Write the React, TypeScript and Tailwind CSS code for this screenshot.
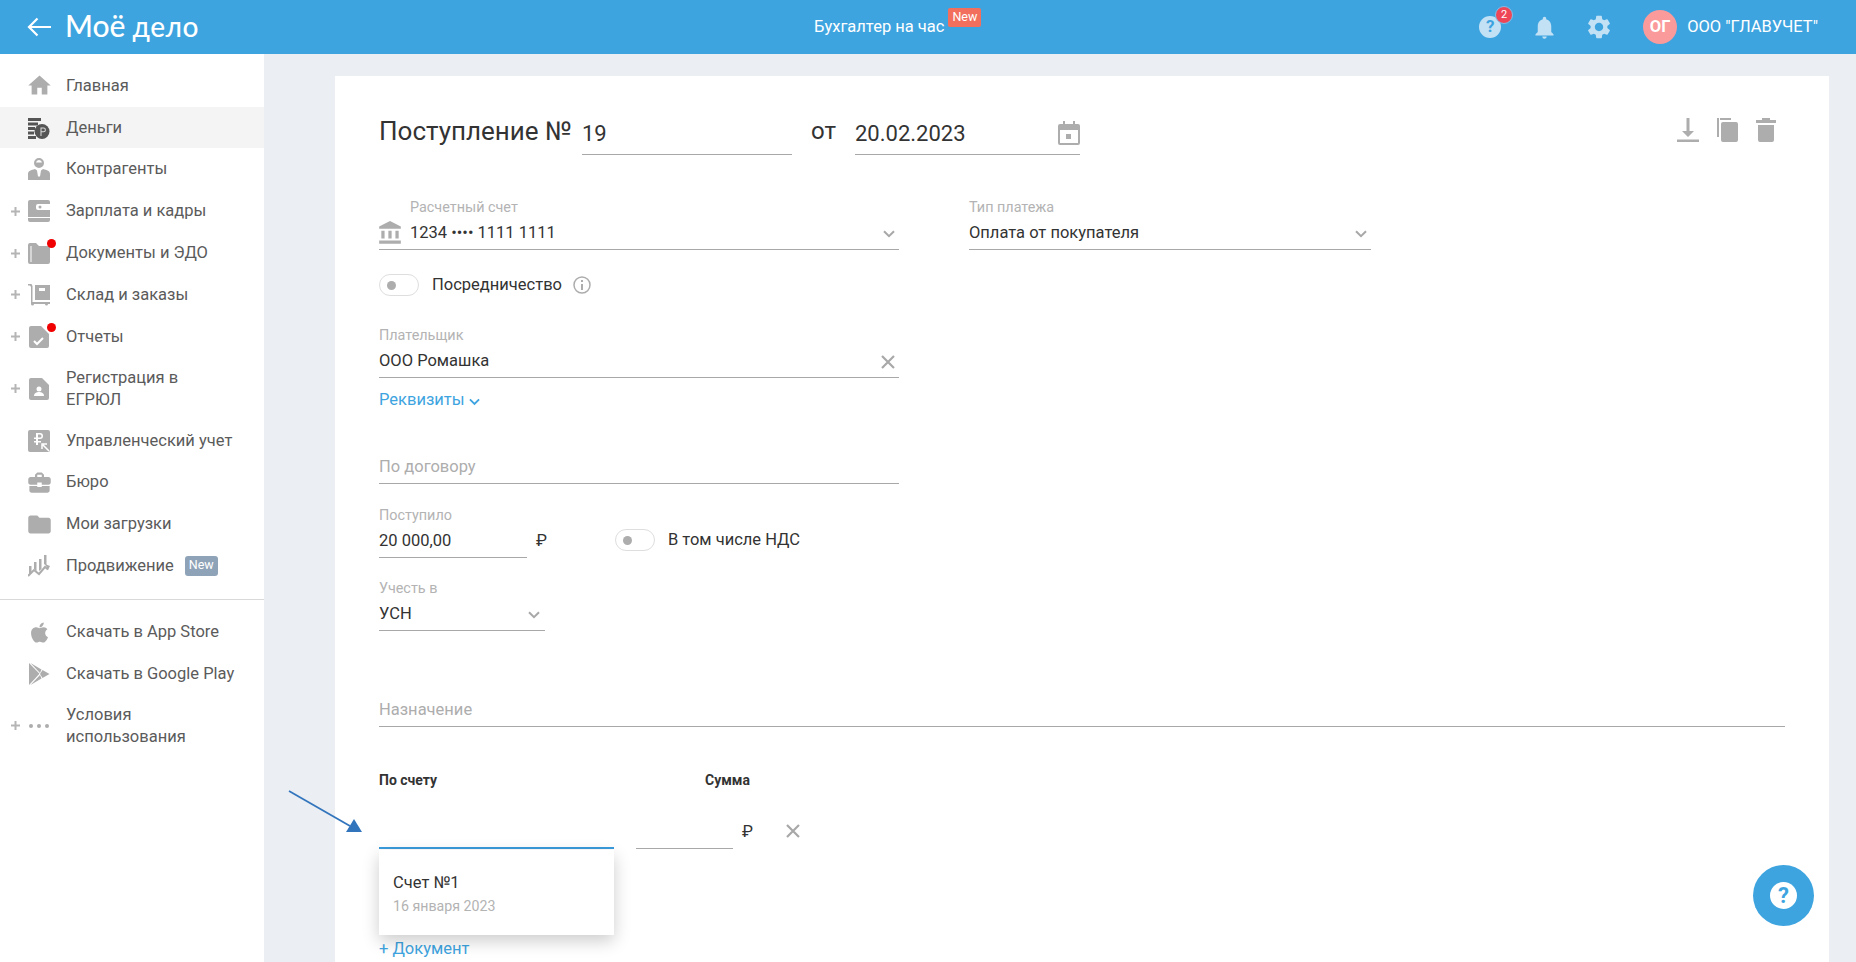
import React from "react";
import {
  MdHome, MdSettings, MdNotifications, MdBusinessCenter, MdFolder, MdAccountBalance,
} from "react-icons/md";
import { FaApple } from "react-icons/fa";

const G = "#adadad";

const Svg = ({ children, size = 22, c = G }: { children: React.ReactNode; size?: number; c?: string }) => (
  <svg width={size} height={size} viewBox="0 0 22 22" fill={c} className="shrink-0">{children}</svg>
);

const Money = () => (
  <Svg>
    <path d="M0 1h13v3H0zM0 5.500h10v3H0zM0 10h7v3H0zM0 14.500h6v3H0zM0 19h8v3H0z" fill="#555" />
    <circle cx="14" cy="14.500" r="7.500" fill="#555" />
    <path d="M12.500 10.500h3a2.200 2.200 0 0 1 0 4.800h-2V19h-1zM13.500 11.500v2.800h2a1.400 1.400 0 0 0 0-2.800z" fill="#ddd" />
  </Svg>
);
const Person = () => (
  <Svg>
    <path d="M11 0a5 5 0 0 1 5 5 5 5 0 0 1-10 0 5 5 0 0 1 5-5zm0 2a3 3 0 0 0-3 2.500h6A3 3 0 0 0 11 2z" />
    <path d="M0 22v-6c0-3 3-4 7-5l2 1.500 1 6h2l1-6 2-1.500c4 1 7 2 7 5v6z" />
  </Svg>
);
const Wallet = () => (
  <Svg>
    <path d="M2 0h18a2 2 0 0 1 2 2v18a2 2 0 0 1-2 2H2a2 2 0 0 1-2-2V2a2 2 0 0 1 2-2z" />
    <path d="M10 4h12v6H10a2 2 0 0 1-2-2V6a2 2 0 0 1 2-2z" fill="#fff" />
    <circle cx="12" cy="7" r="1.500" />
    <path d="M0 17h22v1H0z" fill="#fff" />
  </Svg>
);
const Folder = () => (
  <Svg>
    <path d="M2 1h6l3 3h9a2 2 0 0 1 2 2v14a2 2 0 0 1-2 2H2a2 2 0 0 1-2-2V3a2 2 0 0 1 2-2z" />
    <path d="M3 4v16" stroke="#fff" strokeWidth="1" />
  </Svg>
);
const Cart = () => (
  <Svg>
    <path d="M0 0h3.500l1 2v16h17.500v2h-2a1.500 1.500 0 0 1-3 0H6a1.500 1.500 0 0 1-3 0V3L2 1.500H0z" />
    <path d="M7 1h15v15H7z" />
    <path d="M11 4h6v3h-6z" fill="#fff" />
  </Svg>
);
const DocCheck = () => (
  <Svg>
    <path d="M3 0h10l8 8v12a2 2 0 0 1-2 2H3a2 2 0 0 1-2-2V2a2 2 0 0 1 2-2z" />
    <path d="M6 15l3 3 6-6" fill="none" stroke="#fff" strokeWidth="2" />
  </Svg>
);
const DocPerson = () => (
  <Svg>
    <path d="M3 0h11l7 7v13a2 2 0 0 1-2 2H3a2 2 0 0 1-2-2V2a2 2 0 0 1 2-2z" />
    <circle cx="11" cy="11" r="2.500" fill="#fff" />
    <path d="M6 18c0-3 2.500-4 5-4s5 1 5 4z" fill="#fff" />
  </Svg>
);
const RubArrow = () => (
  <Svg>
    <rect x="0" y="0" width="22" height="22" rx="2" />
    <path d="M8 3h4a3 3 0 0 1 0 6H10v2h3v1.500h-3V15H8v-2.500H6V11h2V9H6V7.500h2zm2 1.500v3h2a1.500 1.500 0 0 0 0-3z" fill="#fff" />
    <path d="M21 21l-6-6M14 19v-5h5" fill="none" stroke="#fff" strokeWidth="1.500" />
  </Svg>
);
const Chart = () => (
  <Svg>
    <path d="M1 11h2.500v6L1 19.500zM6 7h2.500v9L6 14zM11 4h2.500v10L11 16zM16 0h2.500v11L16 9z" />
    <path d="M0 21l6-6 5 4 6-7 3 2.500" fill="none" stroke={G} strokeWidth="2" />
    <path d="M17 9l5 2-2 4z" />
  </Svg>
);
const Play = () => (
  <Svg>
    <path d="M1 0l10.500 10.800L1 22z" />
    <path d="M2.500 0l11 6.500-1.500 3.500z M2.500 22l11-6.500-1.500-3.500z M14.500 7l7 4-7 4-2.500-4z" />
  </Svg>
);
const Dots = () => (
  <Svg>
    <circle cx="3" cy="11" r="2" /><circle cx="11" cy="11" r="2" /><circle cx="19" cy="11" r="2" />
  </Svg>
);

const Icon = ({ children }: { children: React.ReactNode }) => (
  <span className="flex w-[22px] h-[22px] items-center justify-center overflow-visible">{children}</span>
);

type Item = { icon: React.ReactNode; text: React.ReactNode; plus?: boolean; dot?: boolean; active?: boolean; tall?: boolean; badge?: boolean };

const items1: Item[] = [
  { icon: <MdHome size={27} color={G} className="shrink-0" />, text: "Главная" },
  { icon: <Money />, text: "Деньги", active: true },
  { icon: <Person />, text: "Контрагенты" },
  { icon: <Wallet />, text: "Зарплата и кадры", plus: true },
  { icon: <Folder />, text: "Документы и ЭДО", plus: true, dot: true },
  { icon: <Cart />, text: "Склад и заказы", plus: true },
  { icon: <DocCheck />, text: "Отчеты", plus: true, dot: true },
  { icon: <DocPerson />, text: <>Регистрация в<br />ЕГРЮЛ</>, plus: true, tall: true },
  { icon: <RubArrow />, text: "Управленческий учет" },
  { icon: <MdBusinessCenter size={27} color={G} className="shrink-0" />, text: "Бюро" },
  { icon: <MdFolder size={27} color={G} className="shrink-0" />, text: "Мои загрузки" },
  { icon: <Chart />, text: "Продвижение", badge: true },
];
const items2: Item[] = [
  { icon: <FaApple size={23} color={G} className="shrink-0" />, text: "Скачать в App Store" },
  { icon: <Play />, text: "Скачать в Google Play" },
  { icon: <Dots />, text: <>Условия<br />использования</>, plus: true, tall: true },
];

const Row = ({ it }: { it: Item }) => (
  <div className={`flex items-center ${it.tall ? "h-[62px]" : "h-[41.85px]"} ${it.active ? "bg-[#f4f4f4]" : ""}`}>
    <span className="w-[28px] pl-[11px] flex items-center text-[#b5b5b5]">
      {it.plus && (
        <svg width="9" height="9" viewBox="0 0 9 9" fill="#b5b5b5"><path d="M3.500 0h2v3.500H9v2H5.500V9h-2V5.500H0v-2h3.500z" /></svg>
      )}
    </span>
    <span className="relative">
      <Icon>{it.icon}</Icon>
      {it.dot && <span className="absolute right-[-6px] top-[-3px] w-[9px] h-[9px] rounded-full bg-[#f00000]" />}
    </span>
    <span className="ml-[16px] text-[16.5px] leading-[22px] text-[#5b5b5b]">{it.text}</span>
    {it.badge && (
      <span className="ml-[11px] h-[20px] w-[33px] rounded-[3px] bg-[#8fa3b8] text-white text-[12.5px] leading-[18px] text-center">New</span>
    )}
  </div>
);

const Label = ({ children }: { children: React.ReactNode }) => (
  <div className="h-[18px] pt-[1px] text-[14.4px] leading-[18px] text-[#b3b3b3]">{children}</div>
);

const Chevron = ({ className = "", c = "#a8a8a8" }: { className?: string; c?: string }) => (
  <svg width="12" height="8" viewBox="0 0 12 8" fill="none" stroke={c} strokeWidth="2" className={className}>
    <path d="M1 1.200l5 5 5-5" />
  </svg>
);

const Cross = ({ className = "" }: { className?: string }) => (
  <svg width="14" height="14" viewBox="0 0 14 14" fill="none" stroke="#a8a8a8" strokeWidth="2.200" className={className}>
    <path d="M1 1l12 12M13 1L1 13" />
  </svg>
);

const Toggle = () => (
  <span className="flex items-center w-[40px] h-[22px] rounded-full border border-[#dedede] pl-[7px] bg-white">
    <span className="w-[9px] h-[9px] rounded-full bg-[#adadad]" />
  </span>
);

const Ruble = () => <span className="text-[16.5px] leading-[22px] text-[#333]">₽</span>;

const Value = ({ children, className = "" }: { children?: React.ReactNode; className?: string }) => (
  <div className={`flex items-center h-[34px] pt-[2px] border-b border-[#a8a8a8] text-[16.5px] text-[#333] ${className}`}>{children}</div>
);

export default function App() {
  return (
    <div className="relative h-[962px] overflow-hidden flex flex-col bg-[#ebeff3] font-['Roboto',sans-serif]">
      <header className="h-[54px] shrink-0 bg-[#3ea4e0] flex items-center text-white">
        <div className="w-[814px] flex items-center pl-[27px]">
          <svg width="24" height="20" viewBox="0 0 24 20" fill="none" stroke="#fff" strokeWidth="2.200"><path d="M24 10H2M10.500 1.500L2 10l8.500 8.500" /></svg>
          <span className="ml-[14px] mb-[3px] flex items-baseline font-['Lato',sans-serif] leading-[40px] font-medium">
            <span className="text-[30px]">Моё</span>
            <span className="ml-[7px] text-[28px] tracking-[0.5px]">дело</span>
          </span>
        </div>
        <span className="text-[16.5px]">Бухгалтер на час</span>
        <span className="ml-[4px] mb-[19px] h-[19px] w-[33px] rounded-[2px] bg-[#f26f5e] text-[12.5px] leading-[17px] text-center">New</span>
        <div className="ml-auto flex items-center pr-[38px]">
          <span className="relative w-[22px] h-[22px] rounded-full bg-[#c3e1f4] flex items-center justify-center text-[#3ea4e0] text-[17px] font-bold">
            ?
            <span className="absolute right-[-12px] top-[-10px] w-[18px] h-[18px] rounded-full bg-[#ee4557] border border-[#7cc0ea] text-white text-[11px] leading-[16px] text-center font-normal">2</span>
          </span>
          <MdNotifications size={27} color="#c3e1f4" className="ml-[30px]" />
          <MdSettings size={28} color="#c3e1f4" className="ml-[27px]" />
          <span className="ml-[30px] w-[34px] h-[34px] rounded-full bg-[#fb9a9a] text-[16.5px] font-bold flex items-center justify-center">ОГ</span>
          <span className="ml-[10px] text-[16.5px]">ООО "ГЛАВУЧЕТ"</span>
        </div>
      </header>
      <div className="flex flex-1 min-h-0">
        <aside className="w-[264px] shrink-0 bg-white pt-[10.8px]">
          {items1.map((it, i) => <Row key={i} it={it} />)}
          <div className="mt-[12px] mb-[11px] border-t border-[#d9d9d9]" />
          {items2.map((it, i) => <Row key={i} it={it} />)}
        </aside>
        <main className="flex-1 relative pl-[71px] pr-[27px] pt-[22px] min-w-0">
          <svg className="absolute left-[24px] top-[736px]" width="76" height="44" viewBox="0 0 76 44">
            <path d="M1 1L62 36" stroke="#3375bd" strokeWidth="1.800" fill="none" />
            <path d="M74 42L58 42 66 29z" fill="#3375bd" />
          </svg>
          <div className="bg-white h-[900px] px-[44px] pt-[40px] text-[#333]">
            <div className="flex items-start h-[39px]">
              <span className="w-[203px] h-[30px] text-[26px] leading-[30px] text-[#333]">Поступление №</span>
              <div className="w-[210px] h-[39px] flex items-center pb-[3px] border-b border-[#a8a8a8] text-[22px] leading-[30px]">19</div>
              <span className="ml-[19px] w-[44px] h-[30px] text-[24px] leading-[30px]">от</span>
              <div className="w-[225px] h-[39px] flex items-center justify-between pb-[3px] border-b border-[#a8a8a8] text-[22px] leading-[30px]">
                20.02.2023
                <svg width="22" height="24" viewBox="0 0 22 24" fill={G} className="mb-[2px]">
                  <path d="M5 0h2v3h8V0h2v3h3a2 2 0 0 1 2 2v17a2 2 0 0 1-2 2H2a2 2 0 0 1-2-2V5a2 2 0 0 1 2-2h3zM2 9v13h18V9z" />
                  <path d="M8 13h5v5H8z" />
                </svg>
              </div>
              <div className="ml-auto flex items-start gap-[18px] mt-[2px] mr-[9px]">
                <svg width="22" height="24" viewBox="0 0 22 24" fill={G}><path d="M9.500 0h3v13h4.500L11 19 5 13h4.500zM0 21.500h22V24H0z" /></svg>
                <svg width="21" height="24" viewBox="0 0 21 24" fill={G}><path d="M0 0h2v19H0zM3 0h11v2H3zM6 4h13a2 2 0 0 1 2 2v16a2 2 0 0 1-2 2H6a2 2 0 0 1-2-2V6a2 2 0 0 1 2-2z" /></svg>
                <svg width="20" height="24" viewBox="0 0 20 24" fill={G}><path d="M6 0h8v2h6v3H0V2h6zM2 7h16v15a2 2 0 0 1-2 2H4a2 2 0 0 1-2-2z" /></svg>
              </div>
            </div>

            <div className="flex mt-[43px] gap-[70px]">
              <div className="w-[520px] relative">
                <div className="pl-[31px]"><Label>Расчетный счет</Label></div>
                <Value>
                  <MdAccountBalance size={26} color={G} className="ml-[-2px] mr-[7px] mb-[2px]" />
                  <span>1234 •••• 1111 1111</span>
                  <Chevron className="ml-auto mr-[4px]" />
                </Value>
              </div>
              <div className="w-[402px]">
                <Label>Тип платежа</Label>
                <Value>
                  <span>Оплата от покупателя</span>
                  <Chevron className="ml-auto mr-[4px]" />
                </Value>
              </div>
            </div>

            <div className="flex items-center mt-[24px] h-[22px]">
              <Toggle />
              <span className="ml-[13px] text-[16.5px]">Посредничество</span>
              <svg className="ml-[11px]" width="18" height="18" viewBox="0 0 18 18" fill="none" stroke={G} strokeWidth="1.500">
                <circle cx="9" cy="9" r="8" />
                <path d="M9 8v6M9 4v2" strokeWidth="2" />
              </svg>
            </div>

            <div className="w-[520px] mt-[30px]">
              <Label>Плательщик</Label>
              <Value className="h-[33px]">
                <span>ООО Ромашка</span>
                <Cross className="ml-auto mr-[4px]" />
              </Value>
            </div>

            <div className="mt-[11px] h-[22px] flex items-center text-[16.5px] text-[#3ea4e0]">
              Реквизиты
              <Chevron c="#3ea4e0" className="ml-[4px] mt-[3px] w-[11px]" />
            </div>

            <div className="w-[520px] mt-[39px]">
              <Value className="h-[33px] !text-[#adadad]">По договору</Value>
            </div>

            <div className="flex mt-[22px]">
              <div className="w-[148px]">
                <Label>Поступило</Label>
                <Value>20 000,00</Value>
              </div>
              <div className="ml-[9px] mt-[23px]"><Ruble /></div>
              <div className="ml-[68px] mt-[23px] flex items-center h-[22px]">
                <Toggle />
                <span className="ml-[13px] text-[16.5px]">В том числе НДС</span>
              </div>
            </div>

            <div className="w-[166px] mt-[21px]">
              <Label>Учесть в</Label>
              <Value>
                <span>УСН</span>
                <Chevron className="ml-auto mr-[5px]" />
              </Value>
            </div>

            <div className="mt-[62px]">
              <Value className="!text-[#adadad]">Назначение</Value>
            </div>

            <div className="flex mt-[44px] h-[18px] text-[14px] leading-[18px] font-bold">
              <span className="w-[326px]">По счету</span>
              <span>Сумма</span>
            </div>

            <div className="relative flex items-end h-[60px]">
              <div className="w-[235px] border-b-2 border-[#3a9bdc] h-[40px]" />
              <div className="ml-[22px] w-[97px] border-b border-[#a8a8a8] h-[40px]" />
              <div className="ml-[9px] mb-[7px] h-[22px] self-end"><Ruble /></div>
              <Cross className="ml-[33px] mb-[11px]" />
              <div className="absolute left-0 top-[61px] z-10 w-[235px] h-[85px] bg-white shadow-[0_6px_16px_rgba(0,0,0,0.2)] pl-[14px] pt-[22px]">
                <div className="text-[16.5px] leading-[22px] text-[#333]">Счет №1</div>
                <div className="mt-[2px] text-[14.2px] leading-[20px] text-[#b3b3b3]">16 января 2023</div>
              </div>
            </div>

            <div className="mt-[89px] h-[22px] text-[16.5px] leading-[22px] text-[#3ea4e0]">+ Документ</div>
          </div>
        </main>
      </div>
      <div className="absolute left-[1753px] top-[865px] w-[61px] h-[61px] rounded-full bg-[#3ea4e0] flex items-center justify-center">
        <span className="w-[27px] h-[27px] rounded-full bg-white flex items-center justify-center text-[#3ea4e0] text-[22px] font-bold">?</span>
      </div>
    </div>
  );
}
